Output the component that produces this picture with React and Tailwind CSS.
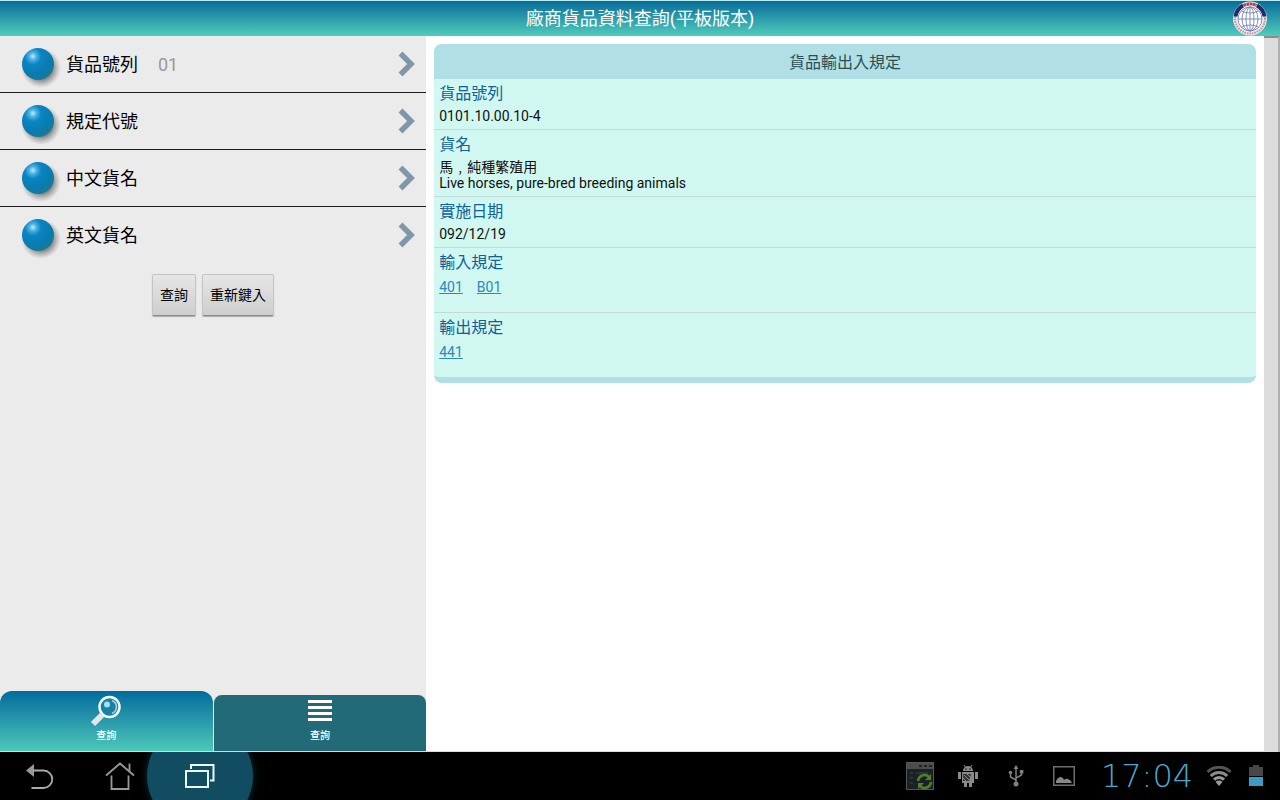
const fields = [
  { label: '貨品號列', value: '01' },
  { label: '規定代號' },
  { label: '中文貨名' },
  { label: '英文貨名' },
];

const details = [
  { title: '貨品號列', lines: ['0101.10.00.10-4'] },
  { title: '貨名', lines: ['馬﹐純種繁殖用', 'Live horses, pure-bred breeding animals'] },
  { title: '實施日期', lines: ['092/12/19'] },
  { title: '輸入規定', links: ['401', 'B01'] },
  { title: '輸出規定', links: ['441'] },
];

function Emblem() {
  return (
    <svg viewBox="0 0 36 36" className="h-9 w-9" role="img" aria-label="標誌">
      <circle cx="18" cy="17.5" r="17" fill="#e4eef0" />
      <circle cx="18" cy="17.5" r="15" fill="none" stroke="#d08a90" strokeWidth="2" strokeDasharray="1.5 1" />
      <path d="M3.500 15.500 A15 15 0 0 1 11 4.500" fill="none" stroke="#1f2d6a" strokeWidth="4" />
      <path d="M25 4.500 A15 15 0 0 1 32.500 15.500" fill="none" stroke="#1f2d6a" strokeWidth="4" />
      <path d="M11.500 4.500 Q18 1.500 24.500 4.500" fill="none" stroke="#b8404e" strokeWidth="3" strokeDasharray="2.500 0.600" />
      <circle cx="18" cy="18" r="12.500" fill="#fff" />
      <g fill="none" stroke="#7482b4" strokeWidth="0.9">
        <circle cx="18" cy="18" r="12" />
        <ellipse cx="18" cy="18" rx="8" ry="12" />
        <ellipse cx="18" cy="18" rx="4" ry="12" />
        <path d="M18 6v24M6 18h24M9.500 10q8.500 4 17 0M9.500 26q8.500-4 17 0" />
      </g>
    </svg>
  );
}

function Orb() {
  return (
    <svg viewBox="0 0 44 48" className="h-12 w-11">
      <defs>
        <radialGradient id="orb" cx="0.34" cy="0.26" r="0.75">
          <stop offset="0" stopColor="#b8ecff" />
          <stop offset="0.16" stopColor="#48b0e0" />
          <stop offset="0.35" stopColor="#0a84c4" />
          <stop offset="0.75" stopColor="#087cae" />
          <stop offset="1" stopColor="#187a98" />
        </radialGradient>
        <radialGradient id="orbShade">
          <stop offset="0.5" stopColor="#444" stopOpacity="0.75" />
          <stop offset="1" stopColor="#777" stopOpacity="0" />
        </radialGradient>
      </defs>
      <circle cx="23" cy="28" r="20" fill="url(#orbShade)" />
      <circle cx="20" cy="24" r="16" fill="url(#orb)" />
    </svg>
  );
}

function Chevron() {
  return (
    <svg viewBox="0 0 18 28" className="h-7 w-[18px]">
      <path d="M2.500 3.500 L13 14 L2.500 24.500" fill="none" stroke="#8097a9" strokeWidth="5.500" />
    </svg>
  );
}

function Magnifier() {
  return (
    <svg viewBox="0 0 32 32" className="h-8 w-8">
      <path d="M12 20 L3 29" stroke="#e3e6e8" strokeWidth="6" />
      <circle cx="19.500" cy="12" r="10" fill="#1880a0" stroke="#f2fbff" strokeWidth="2.500" />
      <path d="M22 5.500 A7 7 0 0 1 22 18.500" fill="none" stroke="#a8d4e2" strokeWidth="1.500" />
      <circle cx="17" cy="9.500" r="3" fill="#9fe0f5" />
    </svg>
  );
}

function StatusIcons() {
  return (
    <>
      <span className="flex w-12 justify-center">
        <svg viewBox="0 0 28 28" className="h-7 w-7">
          <rect x="0.500" y="0.500" width="27" height="27" fill="#1b2226" stroke="#555" />
          <path d="M1 1h26v6H1z" fill="#4c4e4e" />
          <path d="M13 4h3M18 4h3M23 4h3" stroke="#222" strokeWidth="2" />
          <path d="M4 11h3M4 16h3M4 21h3M10 11h12" stroke="#333c46" strokeWidth="1.500" />
          <path d="M12 19a6.500 6.500 0 0 1 11-4M25 20a6.500 6.500 0 0 1-11 4" fill="none" stroke="#527f28" strokeWidth="2.500" />
          <path d="M25 12v6h-6zM12 27v-6h6z" fill="#527f28" />
        </svg>
      </span>
      <span className="flex w-12 justify-center">
        <svg viewBox="0 0 20 22" className="h-[22px] w-5" fill="#8a8a8a">
          <path d="M5 6a5 5 0 0 1 10 0z" />
          <path d="M6 0l2 3M14 0l-2 3" stroke="#8a8a8a" />
          <path d="M0 7h3v7H0zM17 7h3v7h-3zM4 7h12v11H4zM6 18h3v4H6zM11 18h3v4h-3z" />
          <path d="M5 9h8l-2 7H5z" fill="#333" />
          <path d="M6 10l5 5M9 9l3 3M5 13l3 3" stroke="#8a8a8a" />
          <circle cx="8" cy="4" r="0.700" fill="#000" />
          <circle cx="12" cy="4" r="0.700" fill="#000" />
        </svg>
      </span>
      <span className="flex w-12 justify-center">
        <svg viewBox="0 0 16 22" className="h-[22px] w-4">
          <path d="M8 3v16M8 15L2.500 12V8M8 13l5.500-3V6" fill="none" stroke="#808080" strokeWidth="1.500" />
          <path d="M8 0l2.500 4h-5z" fill="#808080" />
          <circle cx="2.500" cy="7.500" r="1.800" fill="#808080" />
          <path d="M11.800 5h3.600v3.500h-3.600z" fill="#808080" />
          <circle cx="8" cy="19" r="2.500" fill="#808080" />
        </svg>
      </span>
      <span className="flex w-12 justify-center">
        <svg viewBox="0 0 22 20" className="h-5 w-[22px]">
          <rect x="0.750" y="0.750" width="20.500" height="18.500" fill="none" stroke="#6e6e6e" strokeWidth="1.500" />
          <path d="M3 17v-2q1-3 4-4 3 0 4 3 2-2 4-1 3 1 4 4z" fill="#888" />
        </svg>
      </span>
    </>
  );
}

function Wifi() {
  return (
    <svg viewBox="0 0 26 20" className="h-5 w-[26px]" fill="none" strokeWidth="3">
      <path d="M1.500 6a16.500 16.500 0 0 1 23 0" stroke="#555" />
      <path d="M4.800 10a11.500 11.500 0 0 1 16.400 0" stroke="#8c8c8c" />
      <path d="M8 13.600a7 7 0 0 1 10 0" stroke="#999" />
      <path d="M13 20l-3.500-4a5 5 0 0 1 7 0z" fill="#999" />
    </svg>
  );
}

function SystemBar() {
  return (
    <nav className="flex h-12 shrink-0 items-stretch overflow-hidden bg-black">
      <button aria-label="返回" className="flex w-20 items-center justify-center">
        <svg viewBox="0 0 28 26" className="h-[26px] w-7">
          <path d="M0 7.500L8 1v13z" fill="#999" />
          <path d="M7 7.500h10.500a8.500 8.500 0 0 1 0 17.500H5.500" fill="none" stroke="#aaa" strokeWidth="1.800" />
        </svg>
      </button>
      <button aria-label="主畫面" className="flex w-20 items-center justify-center">
        <svg viewBox="0 0 30 28" className="h-7 w-[30px]" fill="none" stroke="#999" strokeWidth="1.800">
          <path d="M1 13.500L15 1.500l14 12M24.500 9.500V1.500M6.500 13.500V27h17V13.500" />
        </svg>
      </button>
      <button aria-label="最近使用" className="relative flex w-20 items-center justify-center">
        <span className="absolute top-1/2 left-1/2 size-[106px] -translate-x-1/2 -translate-y-1/2 rounded-full bg-[#124c60] shadow-[0_0_8px_#0a3038]" />
        <svg viewBox="0 0 30 24" className="relative h-6 w-[30px]" fill="none" stroke="#e8fbff" strokeWidth="2">
          <path d="M1 7h22v16H1z" />
          <path d="M6 5V1h22.500v15.500H25" />
        </svg>
      </button>
      <div className="ml-auto flex items-center">
        <StatusIcons />
        <time className="w-[118px] text-center font-['DejaVu_Sans',sans-serif] text-[32px] leading-8 font-extralight whitespace-nowrap text-[#4aa9cc]">
          17:04
        </time>
        <Wifi />
        <span className="flex w-12 justify-center">
          <svg viewBox="0 0 14 22" className="h-[22px] w-3.5">
            <path d="M0 2h4V0h6v2h4v9H0z" fill="#484848" />
            <path d="M0 12h14v9H0z" fill="#3d9cc4" />
          </svg>
        </span>
      </div>
    </nav>
  );
}

function SearchPanel() {
  return (
    <aside className="flex w-[33.3%] shrink-0 flex-col bg-[#ebebeb]">
      <ul className="divide-y divide-[#1c1c1c]">
        {fields.map((field) => (
          <li key={field.label}>
            <button className="flex h-14 w-full items-center pr-2.5 pl-[18px] text-left text-lg text-black">
              <Orb />
              <span className="ml-1 pt-0.5">{field.label}</span>
              <span className="ml-5 pt-0.5 text-[#999]">{field.value}</span>
              <span className="ml-auto">
                <Chevron />
              </span>
            </button>
          </li>
        ))}
      </ul>
      <div className="mt-[11px] flex justify-center gap-1.5">
        {['查詢', '重新鍵入'].map((text) => (
          <button
            key={text}
            className="h-[42px] rounded-xs border border-[#c4c4c4] border-b-[#8c8c8c] bg-linear-to-b from-[#e6e6e6] to-[#cecece] px-[7px] text-sm text-black shadow-[0_1px_1px_#aaa]"
          >
            {text}
          </button>
        ))}
      </div>
      <div className="mt-auto flex items-end gap-px border-b border-[#c8dcdc]">
        <button className="flex h-[60px] flex-1 flex-col items-center rounded-t-xl bg-linear-to-b from-[#006c9c] to-[#4cc8b8] pt-1 text-white">
          <Magnifier />
          <span className="text-[10px] leading-[18px] font-medium">查詢</span>
        </button>
        <button className="flex h-14 flex-1 flex-col items-center rounded-t-lg bg-[#236a78] text-white">
          <svg viewBox="0 0 24 32" className="h-8 w-6" stroke="#fff" strokeWidth="3">
            <path d="M0 6.500h24M0 12.500h24M0 18.500h24M0 24.500h24" />
          </svg>
          <span className="text-[10px] leading-[18px] font-medium">查詢</span>
        </button>
      </div>
    </aside>
  );
}

function DetailCard() {
  return (
    <section className="overflow-hidden rounded-lg border-b-6 border-[#b0e0e6] bg-[#d0f8f0]">
      <h2 className="bg-[#b0e0e6] pt-[3px] text-center text-base leading-8 text-[#2b4f55]">貨品輸出入規定</h2>
      <dl className="divide-y divide-[#bfdcd8]">
        {details.map((item) => (
          <div key={item.title} className="px-[5px] pt-px">
            <dt className="text-base leading-7 text-[#10609c]">{item.title}</dt>
            {item.lines && (
              <dd className="pb-[5px] text-sm leading-4 text-[#111]">
                {item.lines.map((line) => (
                  <p key={line}>{line}</p>
                ))}
              </dd>
            )}
            {item.links && (
              <dd className="flex gap-3.5 pb-[15px] text-sm leading-5">
                {item.links.map((code) => (
                  <a key={code} href={'#' + code} className="text-[#2e88b8] underline">
                    {code}
                  </a>
                ))}
              </dd>
            )}
          </div>
        ))}
      </dl>
    </section>
  );
}

export default function App() {
  return (
    <div lang="zh-Hant" className="flex min-h-screen flex-col bg-white font-[Roboto,'Noto_Sans_CJK_TC',sans-serif]">
      <header className="grid h-9 shrink-0 grid-cols-[1fr_auto_1fr] items-center border-t border-[#b8ecec] bg-linear-to-b from-[#066c9a] to-[#50ccba] pr-3">
        <h1 className="col-start-2 pl-3 text-lg text-white">廠商貨品資料查詢(平板版本)</h1>
        <div className="justify-self-end">
          <Emblem />
        </div>
      </header>
      <div className="flex flex-1">
        <SearchPanel />
        <main className="min-w-0 flex-1 border-b border-[#ddd] p-2">
          <DetailCard />
        </main>
        <div className="w-4 shrink-0 border-t-2 border-r-2 border-t-[#8c8c8c] border-r-[#b0b0b0] bg-[#dcdcdc]" />
      </div>
      <SystemBar />
    </div>
  );
}
